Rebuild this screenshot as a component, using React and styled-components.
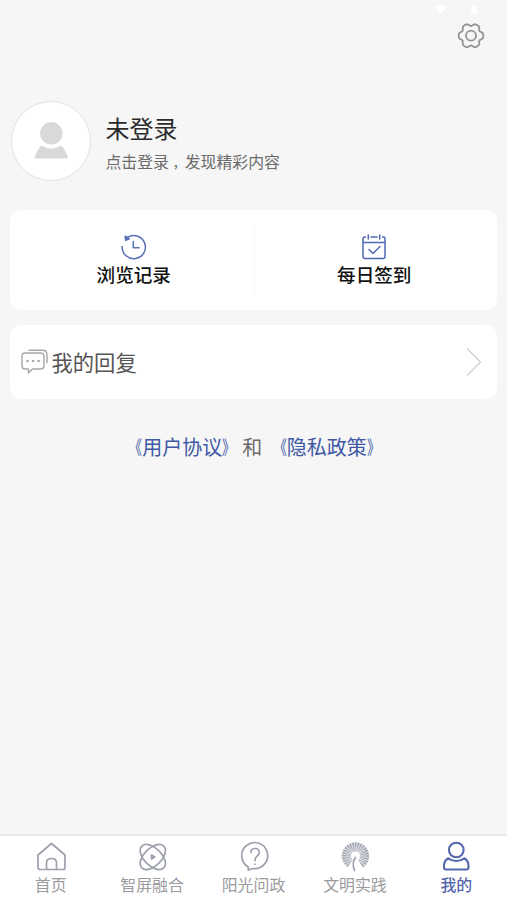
import React from "react";
import styled, { createGlobalStyle } from "styled-components";

const GlobalStyle = createGlobalStyle`
  * {
    box-sizing: border-box;
  }
  body {
    margin: 0;
    background: #f6f6f6;
    font-family: "Noto Sans CJK SC", "Noto Sans", sans-serif;
  }
  svg {
    display: block;
    flex: none;
    fill: none;
    stroke-linecap: round;
    stroke-linejoin: round;
  }
`;

const StyledPage = styled.div`
  display: flex;
  flex-direction: column;
  width: 507px;
  height: 900px;
  overflow: hidden;
  background: #f6f6f6;
`;

const StatusBar = styled.div`
  display: flex;
  justify-content: flex-end;
  gap: 24px;
  height: 20px;
  padding: 5px 30px 0 0;
`;

const TopBar = styled.header`
  display: flex;
  justify-content: flex-end;
  height: 81px;
  padding: 1px 22px 0 0;
`;

const Profile = styled.section`
  display: flex;
  height: 80px;
  padding-left: 11px;
  gap: 14.5px;
`;

const Avatar = styled.div`
  display: flex;
  width: 80px;
  height: 80px;
  border: 1.5px solid #e2e2e2;
  border-radius: 50%;
  background: #fff;
  align-items: center;
  justify-content: center;
`;

const ProfileText = styled.div`
  display: flex;
  flex-direction: column;
  padding-top: 11px;

  h1 {
    margin: 0;
    font-size: 24px;
    line-height: 32px;
    font-weight: 400;
    color: #2b2b2b;
  }
  p {
    margin: 7px 0 0;
    font-size: 15.85px;
    line-height: 22px;
    color: #6b6b6b;
  }
`;

const Comma = styled.span`
  padding-left: 3.85px;
  font-size: 12px;
  font-weight: 500;
`;

const Card = styled.section`
  display: flex;
  align-items: center;
  height: ${props => props.$height}px;
  margin: ${props => props.$top}px 10px 0;
  border-radius: 11px;
  background: #fff;
`;

const Shortcut = styled.div`
  display: flex;
  flex-direction: column;
  align-items: center;
  flex: 1;
  height: 70px;
  padding: 9px ${props => props.$right || 0}px 0 ${props => props.$left || 0}px;
  font-size: 18.6px;
  line-height: 28px;
  font-weight: 500;
  color: #111;

  & + & {
    border-left: 1px solid #f8f8f8;
  }
`;

const StyledRow = styled.div`
  display: flex;
  align-items: center;
  width: 100%;
  padding: 0 15px 0 11px;
`;

const RowLabel = styled.span`
  flex: 1;
  margin-left: 2.5px;
  font-size: 21.3px;
  line-height: 30px;
  color: #555;
`;

const Agreement = styled.p`
  margin: 33px 0 0;
  padding-left: 2px;
  font-size: 20px;
  line-height: 30px;
  text-align: center;
  white-space: pre;
  color: #6b6b6b;

  a {
    color: #4059a5;
  }
`;

const Bracket = styled.span`
  display: inline-block;
  transform: scale(0.66, 0.95);
  transform-origin: ${props => (props.$close ? "left" : "right")} center;
`;

const TabBar = styled.nav`
  display: flex;
  height: 66px;
  margin-top: auto;
  border-top: 2px solid #e9e9e9;
  background: #fff;
`;

const Tab = styled.div`
  display: flex;
  flex-direction: column;
  align-items: center;
  flex: 1;
  padding-top: 4px;
  font-size: 15.9px;
  line-height: 22px;
  font-weight: ${props => (props.$active ? 500 : 400)};
  color: ${props => (props.$active ? "#5568ad" : "#9b9b9f")};

  svg {
    stroke: ${props => (props.$active ? "#5568ad" : "#9da1ad")};
    stroke-width: 1.7;
  }
`;

// six-lobed outline, sampled every 3 degrees
const gearOutline = Array.from({ length: 120 }, (_, i) => {
  const a = (i * Math.PI) / 60;
  const r = 11.3 + 1.3 * Math.cos(6 * a) - 0.3 * Math.cos(12 * a);
  return `${(14 + r * Math.cos(a)).toFixed(2)},${(14 + r * Math.sin(a)).toFixed(2)}`;
}).join(" ");

const GearIcon = () => (
  <svg width="28" height="30" viewBox="0 -0.7 28 30" stroke="#929292" strokeWidth="1.8">
    <polygon points={gearOutline} />
    <circle cx="14" cy="14" r="5" />
  </svg>
);

const PersonIcon = () => (
  <svg width="36" height="40" viewBox="0 0 36 40">
    <circle cx="18.3" cy="12.3" r="11.2" fill="#d9d9d9" />
    <path
      d="M9 24.4Q18.3 31 27.600 24.4Q31 26 34.800 35.500Q35.500 37.500 33.500 37.500H3.500Q1 37.500 1.800 35.500Q5.500 26 9 24.4Z"
      fill="#d9d9d9"
    />
  </svg>
);

const HistoryIcon = () => (
  <svg width="26" height="26" viewBox="0 0 26 26" stroke="#5a70b5" strokeWidth="1.5">
    <path d="M1.200 12.500A11.600 11.600 0 1 0 6 3.700" />
    <path d="M4.200 2.200 4.600 6.300 8.300 4.900Z" fill="#5a70b5" />
    <path d="M12.300 7.500v6.200H18" />
  </svg>
);

const CalendarIcon = () => (
  <svg width="26" height="26" viewBox="0 0 26 26" stroke="#5068b2" strokeWidth="1.500">
    <path d="M4.500 3H3.500Q2 3 2 4.500V22.500Q2 24.500 4 24.500H22Q24 24.500 24 22.500V4.500Q24 3 22.500 3H21.500M10 3H16M7.300 1V5M18.700 1V5M2 8.500H24" />
    <path d="m8 15.500 4 4 7-7" />
  </svg>
);

const ReplyIcon = () => (
  <svg width="28" height="26" viewBox="0 0 28 26" stroke="#a6a6a6" strokeWidth="1.400">
    <path d="M4 4H19.500Q23 4 23 7.500V16.500Q23 20 19.500 20H11.500L7.500 24V20H4Q1 20 1 16.500V7.500Q1 4 4 4Z" />
    <path d="M8 1.300H21.500Q26 1.300 26 6V13.500" />
    <path d="M6.500 12H6.600M12 12H12.100M17.500 12H17.600" strokeWidth="2.500" />
  </svg>
);

const ArrowIcon = () => (
  <svg width="16" height="30" viewBox="0 0 16 30" stroke="#d0d0d0" strokeWidth="1.300">
    <path d="M1.500 2 14.500 15 1.500 28" />
  </svg>
);

const HomeIcon = () => (
  <svg width="34" height="34" viewBox="0 0 34 34">
    <path d="M4 15 17.500 3.500 31 15V27.500Q31 29.500 29 29.500H6Q4 29.500 4 27.500Z" />
    <path d="M12.500 29V23Q12.500 18.500 17.500 18.500T22.500 23V29" />
  </svg>
);

const ScreenIcon = () => (
  <svg width="34" height="34" viewBox="0 0 34 34">
    <ellipse cx="17.800" cy="17" rx="15.500" ry="8.800" transform="rotate(45 17.800 17)" />
    <ellipse cx="17.800" cy="17" rx="15.500" ry="8.800" transform="rotate(-45 17.800 17)" />
    <path d="M16.500 15V19L19.800 17Z" fill="#9da1ad" />
  </svg>
);

const QuestionIcon = () => (
  <svg width="34" height="34" viewBox="-0.8 0 34 34">
    <path d="M10.300 26.800A13 13 0 1 1 15.300 28.500Q13 28.700 10.500 30.200L10.300 26.800" />
    <path d="M13 12.500Q13 8.500 17.200 8.500T21.500 12.500C21.500 16 17.200 16 17.200 20V20.500M17.200 24V24.200" />
  </svg>
);

// tapered feathers of the fan, leaving a gap at the bottom for the stem
const feathers = Array.from({ length: 23 }, (_, i) => {
  const a = ((130 + (i * 282) / 22) * Math.PI) / 180;
  const point = (r, turn) =>
    `${(17.5 + r * Math.cos(a + turn)).toFixed(2)} ${(16 + r * Math.sin(a + turn)).toFixed(2)}`;
  return `M${point(5, 0)}L${point(13.4, -0.065)}L${point(13.4, 0.065)}Z`;
}).join("");

const FanIcon = () => (
  <svg width="34" height="34" viewBox="0 0 34 34">
    <g strokeWidth="0.400">
      <path d={feathers} fill="#9da1ad" />
    </g>
    <path d="M17.500 17.500Q13.500 23 16.500 30.500" />
  </svg>
);

const UserIcon = () => (
  <svg width="34" height="34" viewBox="0 0 34 34">
    <g strokeWidth="2.100">
      <circle cx="17.300" cy="10" r="7.300" />
      <path d="M9.300 18.300Q17.300 23.800 25.300 18.300Q29.500 20.500 29.500 26V27.500Q29.500 29.500 27.500 29.500H7Q5 29.500 5 27.500V26Q5 20.500 9.300 18.300Z" />
    </g>
  </svg>
);

const tabs = [
  { label: "首页", Icon: HomeIcon },
  { label: "智屏融合", Icon: ScreenIcon },
  { label: "阳光问政", Icon: QuestionIcon },
  { label: "文明实践", Icon: FanIcon },
  { label: "我的", Icon: UserIcon, active: true }
];

const AgreementLink = ({ children }) => (
  <a>
    <Bracket>《</Bracket>
    {children}
    <Bracket $close>》</Bracket>
  </a>
);

export default function App() {
  return (
    <StyledPage>
      <GlobalStyle />
      <StatusBar>
        <svg width="12" height="10" viewBox="0 0 12 10">
          <path d="M0 2Q6-2 12 2L6 9Z" fill="#fff" />
        </svg>
        <svg width="6" height="10" viewBox="0 0 6 10">
          <path d="M0 1H6V9H0Z" fill="#fdfdfd" />
        </svg>
      </StatusBar>
      <TopBar>
        <GearIcon />
      </TopBar>
      <Profile>
        <Avatar>
          <PersonIcon />
        </Avatar>
        <ProfileText>
          <h1>未登录</h1>
          <p>
            点击登录<Comma>，</Comma>发现精彩内容
          </p>
        </ProfileText>
      </Profile>
      <Card $height={100} $top={29}>
        <Shortcut $left={4}>
          <HistoryIcon />
          浏览记录
        </Shortcut>
        <Shortcut $right={3}>
          <CalendarIcon />
          每日签到
        </Shortcut>
      </Card>
      <Card $height={74} $top={15}>
        <StyledRow>
          <ReplyIcon />
          <RowLabel>我的回复</RowLabel>
          <ArrowIcon />
        </StyledRow>
      </Card>
      <Agreement>
        <AgreementLink>用户协议</AgreementLink>和 <AgreementLink>隐私政策</AgreementLink>
      </Agreement>
      <TabBar>
        {tabs.map(({ label, Icon, active }) => (
          <Tab key={label} $active={active}>
            <Icon />
            {label}
          </Tab>
        ))}
      </TabBar>
    </StyledPage>
  );
}
